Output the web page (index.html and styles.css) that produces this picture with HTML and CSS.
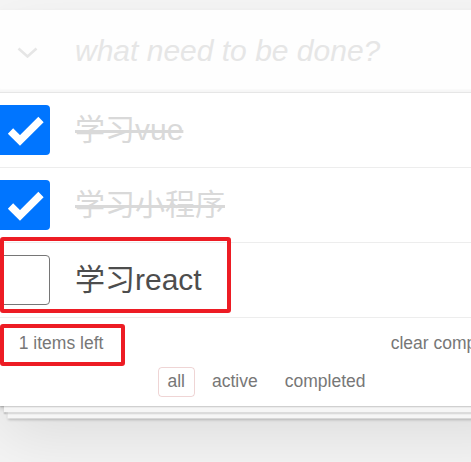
FILE: index.html
```html
<!DOCTYPE html>
<html lang="zh">
<head>
<meta charset="utf-8">
<title>todos</title>
<link rel="stylesheet" href="styles.css">
</head>
<body>
<section class="todoapp">
  <header class="header">
    <span class="toggle-all">
      <svg width="21" height="11" viewBox="0 0 21 11"><polyline points="1.5,1.5 10.5,9.5 19.5,1.5" fill="none" stroke="#e6e6e6" stroke-width="2.6" stroke-linejoin="miter"/></svg>
    </span>
    <span class="new-todo">what need to be done?</span>
  </header>
  <ul class="todo-list">
    <li class="todo completed">
      <span class="check on"><svg width="50" height="50" viewBox="0 0 50 50"><polyline points="10.5,26 20,35.5 41,14.5" fill="none" stroke="#fff" stroke-width="7.5" stroke-linejoin="miter" stroke-linecap="butt"/></svg></span>
      <span class="label">学习vue</span>
    </li>
    <li class="todo completed">
      <span class="check on"><svg width="50" height="50" viewBox="0 0 50 50"><polyline points="10.5,26 20,35.5 41,14.5" fill="none" stroke="#fff" stroke-width="7.5" stroke-linejoin="miter" stroke-linecap="butt"/></svg></span>
      <span class="label">学习小程序</span>
    </li>
    <li class="todo">
      <span class="check"></span>
      <span class="label">学习react</span>
      <span class="mark mark-row"></span>
    </li>
  </ul>
  <footer class="footer">
    <div class="footer-top">
      <span class="count">1 items left</span>
      <span class="clear">clear completed</span>
    </div>
    <ul class="filters">
      <li><a class="filter selected">all</a></li>
      <li><a class="filter">active</a></li>
      <li><a class="filter">completed</a></li>
    </ul>
    <span class="mark mark-count"></span>
  </footer>
</section>
</body>
</html>
```

FILE: styles.css
```css
html, body {
  margin: 0;
  padding: 0;
  overflow: hidden;
}

body {
  width: 471px;
  height: 462px;
  background: #f5f5f5;
  font-family: "Liberation Sans", Arial, "Noto Sans CJK SC", sans-serif;
  color: #4d4d4d;
}

.todoapp {
  position: relative;
  width: 533px;
  margin-top: 10px;
  background: #fff;
  box-shadow: 0 2.5px 5px rgba(0, 0, 0, 0.2), 0 31px 62px rgba(0, 0, 0, 0.1);
}

.header {
  display: flex;
  align-items: center;
  height: 82px;
  background: #fefefe;
  box-shadow: inset 0 -2.5px 1px rgba(0, 0, 0, 0.03);
}

.toggle-all {
  display: flex;
  width: 21px;
  height: 11px;
  margin: 3px 37px 0 17px;
}

.new-todo {
  font-size: 30px;
  font-style: italic;
  color: #e6e6e6;
}

.todo-list {
  list-style: none;
  margin: 0;
  padding: 0;
  border-top: 1px solid #e6e6e6;
}

.todo {
  position: relative;
  display: flex;
  align-items: center;
  height: 74px;
  border-bottom: 1px solid #ededed;
  font-size: 30px;
}

.check {
  display: flex;
  flex: none;
  box-sizing: border-box;
  width: 53px;
  height: 50px;
  margin-left: -3px;
  border: 1.5px solid #767676;
  border-radius: 4px;
  background: #fff;
}

.check.on {
  border: none;
  background: #0075ff;
}

.check.on svg {
  margin-left: 3px;
}

.label {
  margin-left: 25px;
  line-height: 36px;
}

.completed .label {
  color: #d9d9d9;
  text-decoration: line-through;
}

.footer {
  position: relative;
  box-sizing: border-box;
  height: 88px;
  padding: 12.5px 18.75px 0;
  color: #777;
  font-size: 17.5px;
}

.footer::before {
  content: "";
  position: absolute;
  left: 0;
  right: 0;
  bottom: 0;
  height: 62px;
  box-shadow: 0 1.25px 1.25px rgba(0, 0, 0, 0.2),
    0 10px 0 -3.75px #f6f6f6,
    0 11.25px 1.25px -3.75px rgba(0, 0, 0, 0.2),
    0 20px 0 -7.5px #f6f6f6,
    0 21.25px 2.5px -7.5px rgba(0, 0, 0, 0.2);
}

.footer-top {
  display: flex;
  justify-content: space-between;
  align-items: center;
  height: 25px;
  white-space: nowrap;
}

.filters {
  display: flex;
  justify-content: center;
  list-style: none;
  margin: 7.25px 0 0;
  padding: 0;
}

.filter {
  display: block;
  margin: 3.75px;
  padding: 3.75px 8.75px;
  border: 1.25px solid transparent;
  border-radius: 3.75px;
  color: #777;
}

.filter.selected {
  border-color: rgba(175, 47, 47, 0.2);
}

.mark {
  position: absolute;
  box-sizing: border-box;
  border: 4.5px solid #ed1c24;
  border-radius: 3px;
}

.mark-row {
  left: 0;
  top: -6px;
  width: 231px;
  height: 76px;
}

.mark-count {
  left: 0;
  top: 6px;
  width: 125px;
  height: 42px;
}
```
